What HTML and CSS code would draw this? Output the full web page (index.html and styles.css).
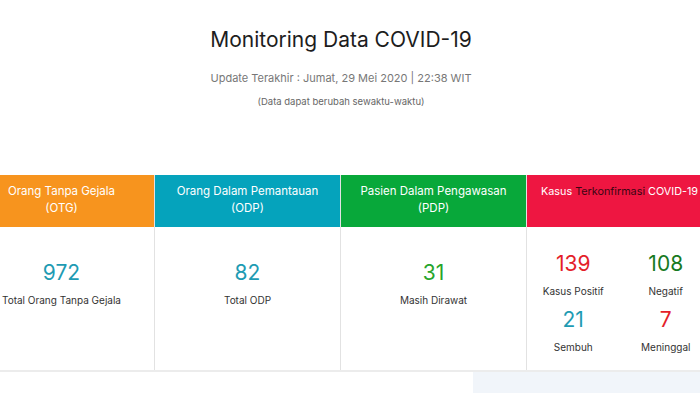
FILE: index.html
```html
<!DOCTYPE html>
<html lang="id">
<head>
    <meta charset="UTF-8">
    <meta name="viewport" content="width=device-width, initial-scale=1.0">
    <title>Monitoring Data COVID-19</title>
    <link rel="stylesheet" href="styles.css">
</head>
<body>
    <div class="page">
        <div class="intro">
            <h1>Monitoring Data COVID-19</h1>
            <p class="update">Update Terakhir : Jumat, 29 Mei 2020 | 22:38 WIT</p>
            <p class="note">(Data dapat berubah sewaktu-waktu)</p>
        </div>
        <div class="cards">
            <div class="card">
                <div class="card-head otg">Orang Tanpa Gejala<br>(OTG)</div>
                <div class="card-body">
                    <div class="stat">
                        <span class="num teal">972</span>
                        <span class="label">Total Orang Tanpa Gejala</span>
                    </div>
                </div>
            </div>
            <div class="card">
                <div class="card-head odp">Orang Dalam Pemantauan<br>(ODP)</div>
                <div class="card-body">
                    <div class="stat">
                        <span class="num teal">82</span>
                        <span class="label">Total ODP</span>
                    </div>
                </div>
            </div>
            <div class="card">
                <div class="card-head pdp">Pasien Dalam Pengawasan<br>(PDP)</div>
                <div class="card-body">
                    <div class="stat">
                        <span class="num green">31</span>
                        <span class="label">Masih Dirawat</span>
                    </div>
                </div>
            </div>
            <div class="card">
                <div class="card-head kasus">Kasus <span class="dark">Terkonfirmasi</span> COVID-19</div>
                <div class="card-body grid">
                    <div class="stat">
                        <span class="num red">139</span>
                        <span class="label">Kasus Positif</span>
                    </div>
                    <div class="stat">
                        <span class="num darkgreen">108</span>
                        <span class="label">Negatif</span>
                    </div>
                    <div class="stat">
                        <span class="num teal">21</span>
                        <span class="label">Sembuh</span>
                    </div>
                    <div class="stat">
                        <span class="num red">7</span>
                        <span class="label">Meninggal</span>
                    </div>
                </div>
            </div>
        </div>
        <div class="next">
            <div class="next-panel"></div>
        </div>
    </div>
</body>
</html>
```

FILE: styles.css
```css
body {
    font-family: "Inter", "Noto Sans", sans-serif;
    margin: 0;
    padding: 0;
    background: #fff;
    overflow: hidden;
}
.page {
    width: 744px;
    margin-left: -31px;
}
.intro {
    text-align: center;
    padding-top: 26px;
}
.intro h1 {
    margin: 0;
    font-size: 21px;
    font-weight: 400;
    color: #1d1d1d;
    line-height: 28px;
}
.update {
    margin: 16px 0 0;
    font-size: 11px;
    color: #777;
    line-height: 16px;
}
.note {
    margin: 9px 0 0;
    font-size: 9.5px;
    color: #666;
    line-height: 14px;
}
.cards {
    display: flex;
    margin-top: 66px;
    border-bottom: 2px solid #ececec;
}
.card {
    width: 186px;
    border-right: 1px solid #e2e2e2;
}
.card-head {
    height: 52px;
    box-sizing: border-box;
    padding-top: 8px;
    color: #fff;
    text-align: center;
    font-size: 11.5px;
    line-height: 17px;
}
.otg { background: #f7941e; }
.odp { background: #05a3bc; }
.pdp { background: #08a83a; }
.kasus {
    background: #ee1641;
    font-size: 10.8px;
}
.dark { color: #3a0512; }
.card-body {
    height: 143px;
    box-sizing: border-box;
    padding-top: 34px;
}
.card-body.grid {
    display: grid;
    grid-template-columns: 1fr 1fr;
    align-content: start;
    row-gap: 10px;
    padding-top: 25px;
}
.stat {
    display: flex;
    flex-direction: column;
    align-items: center;
}
.num {
    font-size: 21px;
    line-height: 24px;
}
.label {
    font-size: 10px;
    color: #333;
    margin-top: 8px;
    line-height: 14px;
}
.teal { color: #1e9bb3; }
.green { color: #27a52c; }
.red { color: #e41e2a; }
.darkgreen { color: #177a1f; }
.next {
    display: flex;
    justify-content: flex-end;
}
.next-panel {
    width: 240px;
    height: 30px;
    background: #f1f5fa;
}
```
